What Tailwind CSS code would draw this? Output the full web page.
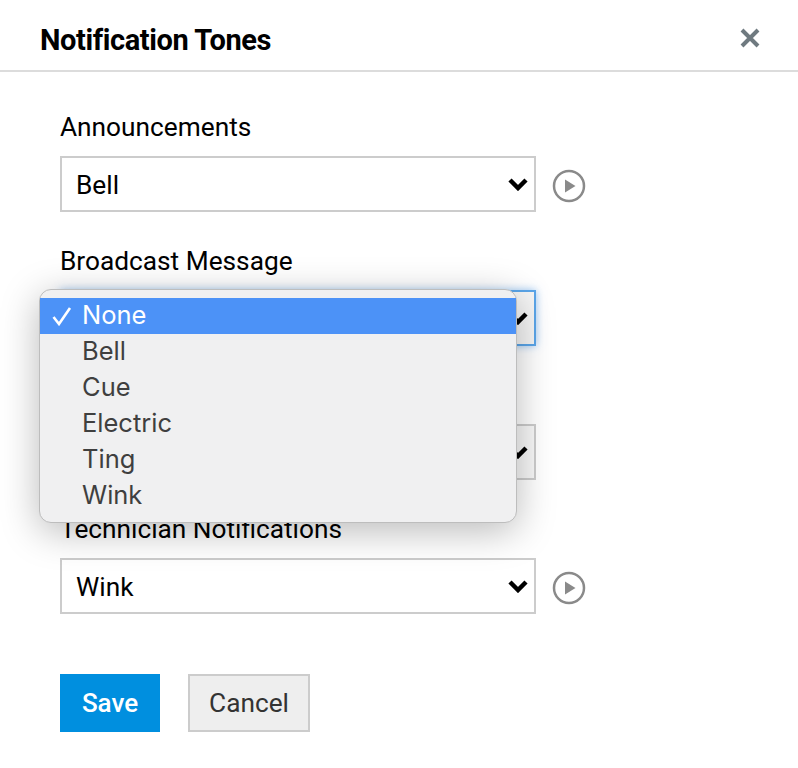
<!DOCTYPE html>
<html lang="en">
<head>
  <meta charset="UTF-8" />
  <title>Notification Tones</title>
  <script src="https://cdn.jsdelivr.net/npm/@tailwindcss/browser@4"></script>
</head>
<body class="bg-white font-['Roboto',sans-serif] text-black overflow-hidden">
  <div class="relative w-[798px] h-[768px]">

    <!-- Header -->
    <header class="h-[72px] border-b-2 border-[#dcdcdc] pl-[40px] pr-[37px] pt-[10px] flex items-center justify-between">
      <h1 class="text-[29px] font-bold tracking-[-0.4px] leading-none">Notification Tones</h1>
      <svg class="w-[22px] h-[22px] -mt-[4px]" viewBox="0 0 22 22" fill="none" stroke="#6f7a80" stroke-width="4">
        <path d="M3 3 L19 19 M19 3 L3 19" />
      </svg>
    </header>

    <!-- Form -->
    <main class="pl-[60px] pt-[38px]">
      <section class="h-[134px]">
        <label class="block text-[26.25px] leading-[34px] mb-[12px]">Announcements</label>
        <div class="flex items-center gap-[16px]">
          <div class="relative w-[476px] h-[56px]">
            <select class="appearance-none w-full h-full border-2 border-[#cccccc] bg-white pl-[14px] pt-[3px] text-[26.25px] outline-none">
              <option>Bell</option>
            </select>
            <svg class="absolute right-[8px] top-[21px] w-[20px] h-[14px]" viewBox="0 0 20 14" fill="none" stroke="#000" stroke-width="4.5"><path d="M2 3 L10 11 L18 3" /></svg>
          </div>
          <svg class="w-[34px] h-[34px] mt-[3px]" viewBox="0 0 34 34">
            <circle cx="17" cy="17" r="15" fill="none" stroke="#8a8a8a" stroke-width="2.5" />
            <path d="M13 10.5 L23.5 17 L13 23.5 Z" fill="#8a8a8a" />
          </svg>
        </div>
      </section>

      <section class="h-[134px]">
        <label class="block text-[26.25px] leading-[34px] mb-[12px]">Broadcast Message</label>
        <div class="flex items-center gap-[16px]">
          <div class="relative w-[476px] h-[56px]">
            <select class="appearance-none w-full h-full border-2 border-[#5ba6ea] bg-[#f6f6f6] pl-[14px] pt-[3px] text-[26.25px] outline-none shadow-[0_0_8px_rgba(70,150,235,0.55)]">
              <option></option>
            </select>
            <svg class="absolute right-[8px] top-[21px] w-[20px] h-[14px]" viewBox="0 0 20 14" fill="none" stroke="#000" stroke-width="4.5"><path d="M2 3 L10 11 L18 3" /></svg>
          </div>
        </div>
      </section>

      <!-- Third row: its label and value sit behind the open list -->
      <section class="h-[134px] pt-[46px]">
        <div class="flex items-center gap-[16px]">
          <div class="relative w-[476px] h-[56px]">
            <select class="appearance-none w-full h-full border-2 border-[#cccccc] bg-[#f8f8f8] pl-[14px] pt-[3px] text-[26.25px] outline-none">
              <option></option>
            </select>
            <svg class="absolute right-[8px] top-[21px] w-[20px] h-[14px]" viewBox="0 0 20 14" fill="none" stroke="#000" stroke-width="4.5"><path d="M2 3 L10 11 L18 3" /></svg>
          </div>
        </div>
      </section>

      <section class="h-[162px]">
        <label class="block text-[26.25px] leading-[34px] mb-[12px]">Technician Notifications</label>
        <div class="flex items-center gap-[16px]">
          <div class="relative w-[476px] h-[56px]">
            <select class="appearance-none w-full h-full border-2 border-[#cccccc] bg-white pl-[14px] pt-[3px] text-[26.25px] outline-none">
              <option>Wink</option>
            </select>
            <svg class="absolute right-[8px] top-[21px] w-[20px] h-[14px]" viewBox="0 0 20 14" fill="none" stroke="#000" stroke-width="4.5"><path d="M2 3 L10 11 L18 3" /></svg>
          </div>
          <svg class="w-[34px] h-[34px] mt-[3px]" viewBox="0 0 34 34">
            <circle cx="17" cy="17" r="15" fill="none" stroke="#8a8a8a" stroke-width="2.5" />
            <path d="M13 10.5 L23.5 17 L13 23.5 Z" fill="#8a8a8a" />
          </svg>
        </div>
      </section>

      <!-- Buttons -->
      <div class="flex gap-[28px]">
        <button class="w-[100px] h-[58px] bg-[#008fdf] text-white text-[26px] font-medium">Save</button>
        <button class="w-[122px] h-[58px] pt-[2px] bg-[#eeeeee] border-2 border-[#cccccc] text-[#333333] text-[26.25px]">Cancel</button>
      </div>
    </main>

    <!-- Open dropdown list -->
    <div class="absolute left-[39px] top-[289px] w-[478px] h-[234px] py-[8px] bg-[#f0f0f1] border border-[#bdbdbd] rounded-[12px] shadow-[0_8px_38px_rgba(0,0,0,0.28)] font-['Inter',sans-serif] text-[25.5px] text-[#3f3f3f]">
      <div class="relative h-[36px] pl-[42px] pb-[2px] flex items-center bg-[#4c92f7] text-white">
        <svg class="absolute left-[12px] top-[8px] w-[20px] h-[20px]" viewBox="0 0 20 20" fill="none" stroke="#fff" stroke-width="2.6"><path d="M1.5 11 L7 18 L18 2" /></svg>
        None
      </div>
      <div class="h-[36px] pl-[42px] pb-[2px] flex items-center">Bell</div>
      <div class="h-[36px] pl-[42px] pb-[2px] flex items-center">Cue</div>
      <div class="h-[36px] pl-[42px] pb-[2px] flex items-center">Electric</div>
      <div class="h-[36px] pl-[42px] pb-[2px] flex items-center">Ting</div>
      <div class="h-[36px] pl-[42px] pb-[2px] flex items-center">Wink</div>
    </div>
  </div>
</body>
</html>
